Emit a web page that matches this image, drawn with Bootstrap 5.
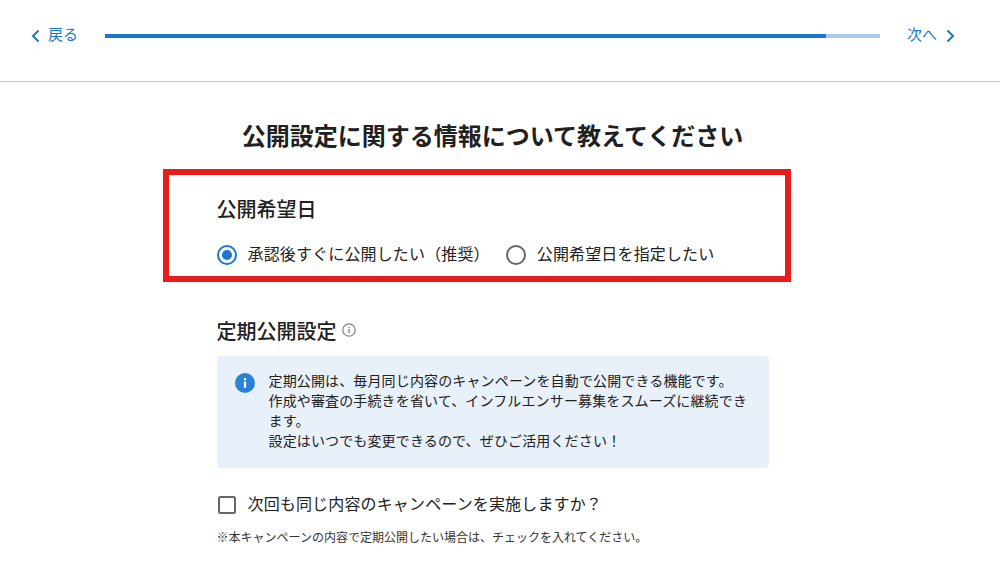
<!DOCTYPE html>
<html lang="ja">
<head>
  <meta charset="UTF-8">
  <meta name="viewport" content="width=device-width, initial-scale=1.0">
  <title>公開設定</title>
  <link href="https://cdn.jsdelivr.net/npm/bootstrap@5.3.0/dist/css/bootstrap.min.css" rel="stylesheet">
  <style>
    body {
      font-family: Roboto, "Noto Sans CJK JP", sans-serif;
      color: #212121;
      overflow: hidden;
    }
    .page-wrap { width: 985px; }
    .top-bar {
      height: 82px;
      padding: 0 0 10px 31px;
      border-bottom: 1px solid #c8c8c8;
      width: 1000px;
    }
    .nav-link-step {
      color: #1976d2;
      font-size: 15px;
      text-decoration: none;
      white-space: nowrap;
      flex: none;
    }
    .step-back { width: 74px; gap: 8px; }
    .step-next { width: 70px; margin-left: 27px; gap: 9px; }
    .step-bar {
      width: 775px;
      height: 4px;
      flex: none;
      background: #a9c9ee;
      border-radius: 0;
    }
    .step-bar .progress-bar { background: #1976d2; }
    .form-body { width: 552px; margin: 0 auto; }
    .page-title {
      font-size: 24px;
      font-weight: 700;
      line-height: 36px;
      margin: 37px -20px 0;
      text-align: center;
    }
    .field-title {
      font-size: 20px;
      font-weight: 500;
      line-height: 30px;
      margin: 0;
    }
    .date-title { margin-top: 40px; }
    .choice-row { font-size: 16px; line-height: 24px; letter-spacing: .15px; }
    .choice-row svg { flex: none; }
    .choice-text { margin-left: 11px; }
    .date-row { margin-top: 18px; }
    .second-radio { margin-left: 16px; }
    .section-head { margin-top: 50px; gap: 5px; }
    .note-box {
      background: #e8f0f9;
      border-radius: 4px;
      font-size: 14px;
      line-height: 20px;
      letter-spacing: .14px;
      padding: 15px 18px;
      margin-top: 9px;
      height: 112px;
    }
    .note-icon { margin-top: 2px; }
    .note-text { margin-left: 14px; }
    .check-line { margin-top: 25px; }
    .small-note { font-size: 12px; line-height: 18px; color: #333; margin: 12px 0 0; }
    .red-frame {
      position: absolute;
      left: 163px;
      top: 169px;
      width: 628px;
      height: 113px;
      border: 6px solid #e91c1c;
      pointer-events: none;
    }
  </style>
</head>
<body>
  <div class="page-wrap">
    <div class="top-bar d-flex align-items-center">
      <a href="#" class="nav-link-step step-back d-flex align-items-center">
        <svg width="9" height="14" viewBox="0 0 9 14"><path d="M7.5 1.5 2 7l5.500 5.500" fill="none" stroke="#1976d2" stroke-width="2"/></svg>
        <span>戻る</span>
      </a>
      <div class="progress step-bar">
        <div class="progress-bar" style="width: 93%"></div>
      </div>
      <a href="#" class="nav-link-step step-next d-flex align-items-center">
        <span>次へ</span>
        <svg width="9" height="14" viewBox="0 0 9 14"><path d="M1.500 1.500 7 7l-5.500 5.500" fill="none" stroke="#1976d2" stroke-width="2"/></svg>
      </a>
    </div>

    <div class="form-body">
      <h1 class="page-title">公開設定に関する情報について教えてください</h1>

      <section>
        <h2 class="field-title date-title">公開希望日</h2>
        <div class="choice-row date-row d-flex align-items-center">
          <svg width="20" height="20" viewBox="0 0 20 20"><circle cx="10" cy="10" r="9" fill="none" stroke="#1976d2" stroke-width="2"/><circle cx="10" cy="10" r="5" fill="#1976d2"/></svg>
          <span class="choice-text">承認後すぐに公開したい（推奨）</span>
          <svg class="second-radio" width="20" height="20" viewBox="0 0 20 20"><circle cx="10" cy="10" r="9" fill="none" stroke="#666" stroke-width="2"/></svg>
          <span class="choice-text">公開希望日を指定したい</span>
        </div>
      </section>

      <section>
        <div class="d-flex align-items-center section-head">
          <h2 class="field-title">定期公開設定</h2>
          <svg width="14" height="14" viewBox="0 0 14 14" class="mb-1"><circle cx="7" cy="7" r="6.200" fill="none" stroke="#888" stroke-width="1.300"/><rect x="6.300" y="6" width="1.400" height="4.200" fill="#888"/><rect x="6.300" y="3.700" width="1.400" height="1.400" fill="#888"/></svg>
        </div>
        <div class="note-box d-flex">
          <svg class="note-icon flex-shrink-0" width="20" height="20" viewBox="0 0 20 20"><circle cx="10" cy="10" r="10" fill="#2b82d9"/><rect x="8.900" y="8.500" width="2.200" height="6.500" fill="#fff"/><rect x="8.900" y="5" width="2.200" height="2.200" fill="#fff"/></svg>
          <div class="note-text">定期公開は、毎月同じ内容のキャンペーンを自動で公開できる機能です。<br>作成や審査の手続きを省いて、インフルエンサー募集をスムーズに継続できます。<br>設定はいつでも変更できるので、ぜひご活用ください！</div>
        </div>
        <div class="choice-row check-line d-flex align-items-center">
          <svg width="20" height="20" viewBox="0 0 20 20"><rect x="2" y="2" width="16" height="16" rx="1.500" fill="none" stroke="#666" stroke-width="2"/></svg>
          <span class="choice-text">次回も同じ内容のキャンペーンを実施しますか？</span>
        </div>
        <p class="small-note">※本キャンペーンの内容で定期公開したい場合は、チェックを入れてください。</p>
      </section>
    </div>
  </div>
  <div class="red-frame"></div>
</body>
</html>
